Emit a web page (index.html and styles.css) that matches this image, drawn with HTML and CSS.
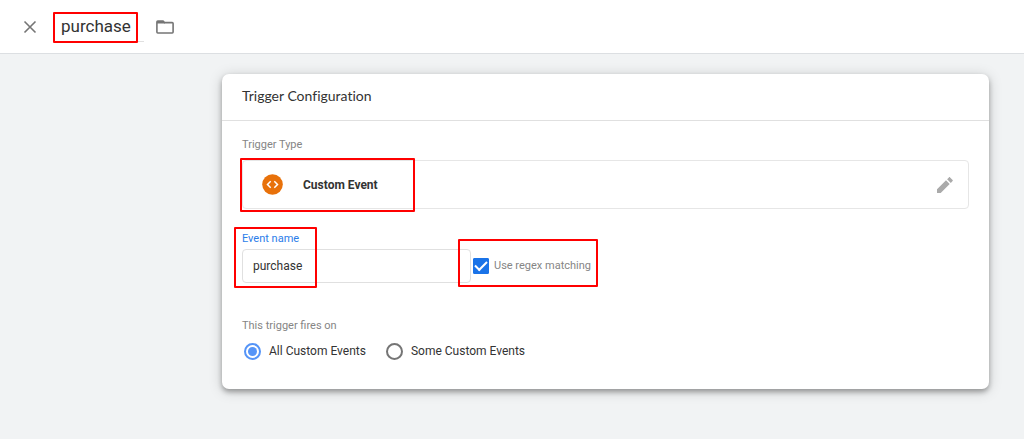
FILE: index.html
```html
<!DOCTYPE html>
<html lang="en">
<head>
<meta charset="utf-8">
<title>Trigger Configuration</title>
<link rel="stylesheet" href="styles.css">
</head>
<body>
<header class="topbar">
  <button class="icon-button" type="button" aria-label="Close">
    <svg width="14" height="14" viewBox="0 0 14 14"><path d="M1.500 1.500l11 11M12.500 1.500l-11 11" fill="none" stroke="#757575" stroke-width="1.600"/></svg>
  </button>
  <div class="title marked mark-title">
    <input class="title-input" type="text" value="purchase" aria-label="Trigger name">
  </div>
  <button class="icon-button" type="button" aria-label="Folder">
    <svg width="18" height="14" viewBox="0 0 18 14"><path d="M1.800 1H7l1.600 1.600h7.600a.9.9 0 0 1 .9.9v8.600a.9.9 0 0 1-.9.9H1.800a.9.9 0 0 1-.9-.9V1.900a.9.9 0 0 1 .9-.9z" fill="none" stroke="#757575" stroke-width="1.600"/><path d="M1 1h6l2 2.400H1z" fill="#757575"/></svg>
  </button>
</header>
<main class="page">
  <section class="card">
    <h1 class="card-title">Trigger Configuration</h1>
    <div class="card-body">
      <div class="label">Trigger Type</div>
      <div class="type-box">
        <div class="type marked mark-type">
          <svg width="21" height="21" viewBox="0 0 21 21"><circle cx="10.500" cy="10.500" r="10.300" fill="#e8710a"/><path d="M8.700 7.300l-3.200 3.200 3.200 3.200M12.300 7.300l3.200 3.200-3.200 3.200" fill="none" stroke="#fff" stroke-width="1.500"/></svg>
          <span class="type-name">Custom Event</span>
        </div>
        <button class="icon-button" type="button" aria-label="Edit">
          <svg width="16" height="16" viewBox="0 0 16 16"><path d="M0 12.300V16h3.700l9-9L9 3.300zM15.600 4.100c.4-.4.4-.9 0-1.200L13.100.4c-.4-.4-.9-.4-1.200 0l-1.800 1.800 3.700 3.700z" fill="#aaa"/></svg>
        </button>
      </div>
      <div class="event-row">
        <div class="event marked mark-event">
          <label class="label label-active" for="event-name">Event name</label>
          <input class="text-input" id="event-name" type="text" value="purchase">
        </div>
        <label class="regex marked mark-regex">
          <input class="checkbox" type="checkbox" checked>
          <span class="label">Use regex matching</span>
        </label>
      </div>
      <fieldset class="fires">
        <legend class="label">This trigger fires on</legend>
        <div class="options">
          <label class="option"><input class="radio" type="radio" name="fires" checked>All Custom Events</label>
          <label class="option"><input class="radio" type="radio" name="fires">Some Custom Events</label>
        </div>
      </fieldset>
    </div>
  </section>
</main>
</body>
</html>
```
FILE: styles.css
```css
* { box-sizing: border-box; }
body {
  margin: 0;
  min-height: 100vh;
  background: #f1f3f4;
  color: #333;
  font-family: Roboto, sans-serif;
  font-size: 12px;
}
input { font-family: inherit; color: inherit; margin: 0; }
svg { display: block; }
.icon-button { border: 0; padding: 0; background: none; cursor: pointer; }

.topbar {
  display: flex;
  align-items: center;
  height: 54px;
  padding: 0 23px;
  background: #fff;
  border-bottom: 1px solid #dcdfe2;
}
.title { margin: 0 12px 0 24px; }
.title-input {
  display: block;
  width: 83px;
  height: 30px;
  padding: 0;
  border: 0;
  border-bottom: 1px solid #e0e0e0;
  background: none;
  font-size: 17px;
  outline: 0;
}

.page { padding: 20px 35px 50px 222px; }
.card {
  background: #fff;
  border-radius: 7px;
  box-shadow: 0 3px 5px rgba(0, 0, 0, .3), 0 2px 14px rgba(0, 0, 0, .18);
}
.card-title {
  margin: 0;
  padding: 11px 20px 13px;
  border-bottom: 1px solid #e0e0e0;
  font-family: Lato, sans-serif;
  font-size: 14px;
  font-weight: 400;
  font-variant-ligatures: none;
  line-height: 22px;
}
.card-body { padding: 16px 20px 28px; }
.label { display: block; padding: 0; font-size: 11px; line-height: 16px; color: #858585; }
.label-active { color: #2b7de9; }

.type-box {
  display: flex;
  align-items: center;
  justify-content: space-between;
  height: 49px;
  margin: 7px 0 22px;
  padding-right: 15px;
  border: 1px solid #e6e6e6;
  border-radius: 4px;
}
.type { display: flex; align-items: center; gap: 20px; padding-left: 19px; }
.type-name { font-weight: 700; }

.event-row { display: flex; align-items: flex-end; gap: 2px; }
.text-input {
  display: block;
  width: 229px;
  height: 34px;
  margin-top: 2px;
  padding: 0 10px;
  border: 1px solid #e0e0e0;
  border-radius: 4px;
  background: #fff;
  font-size: 12px;
  outline: 0;
}
.regex { display: flex; align-items: center; gap: 5px; height: 34px; }
.checkbox {
  appearance: none;
  width: 16px;
  height: 16px;
  border: 1px solid #757575;
  border-radius: 1px;
  display: grid;
  place-items: center;
}
.checkbox:checked { background: #1a73e8; border-color: #1a73e8; }
.checkbox:checked::before {
  content: "";
  width: 10px;
  height: 5px;
  margin-bottom: 3px;
  border: solid #fff;
  border-width: 0 0 2px 2px;
  transform: rotate(-45deg);
}

.fires { margin: 35px 0 0; padding: 0; border: 0; }
.options { display: flex; gap: 20px; padding: 7px 2px 0; }
.option { display: flex; align-items: center; gap: 8px; line-height: 20px; }
.radio {
  appearance: none;
  display: grid;
  place-items: center;
  width: 17px;
  height: 17px;
  border: 2px solid #757575;
  border-radius: 50%;
}
.radio:checked { border-color: #5594f7; }
.radio:checked::before {
  content: "";
  width: 9px;
  height: 9px;
  border-radius: 50%;
  background: #5594f7;
}

/* Red annotation frames, drawn over the form */
.marked { position: relative; }
.marked::after {
  content: "";
  position: absolute;
  border: 2px solid #f00;
  border-radius: 1px;
  pointer-events: none;
}
.mark-title::after { inset: 0 6px -1px -8px; }
.mark-type::after { inset: -16px -37px -17px -3px; }
.mark-event::after { inset: -4px 154px -5px -8px; }
.mark-regex::after { inset: -10px -7px -4px -15px; }
```
